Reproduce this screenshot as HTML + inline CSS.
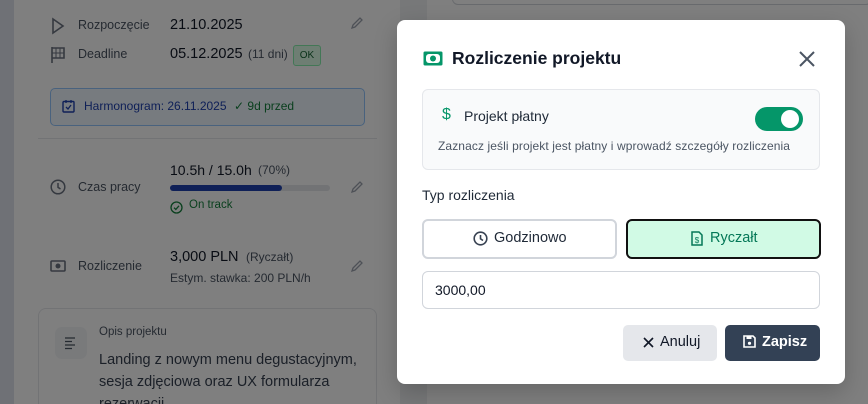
<!DOCTYPE html>
<html style="overflow:hidden"><head><meta charset="utf-8"><style>
*{box-sizing:border-box;margin:0;padding:0}
html,body{width:868px;height:404px;overflow:hidden}
body{position:relative;font-family:"Liberation Sans","DejaVu Sans",sans-serif;background:#fff;color:#1f2937}
.a{position:absolute}
.lbl{font-size:12.5px;color:#4b5563}
.val{font-size:14.5px;color:#111827;font-weight:500}
</style></head><body>
<div class="a" style="left:0;top:0;width:14px;height:404px;background:#dfe3ec"></div>
<div class="a" style="left:400px;top:0;width:27px;height:404px;background:#eef0f3"></div>
<div class="a" style="left:452px;top:-10px;width:420px;height:15px;border:1px solid #d1d5db;border-radius:6px"></div>

<svg class="a" style="left:50px;top:17px" width="16" height="18" viewBox="0 0 16 18"><path d="M3 2 L13 9 L3 16 Z" fill="none" stroke="#6b7280" stroke-width="1.6"/></svg>
<div class="a lbl" style="left:78px;top:18px">Rozpoczęcie</div>
<div class="a val" style="left:170px;top:17px">21.10.2025</div>
<svg class="a" style="left:350px;top:16px" width="14" height="14" viewBox="0 0 14 14"><path d="M2 12 L3 9 L10 2 L12 4 L5 11 Z" fill="none" stroke="#9ca3af" stroke-width="1.3"/></svg>

<svg class="a" style="left:50px;top:46px" width="16" height="18" viewBox="0 0 16 18"><path d="M2 1 V17 M2 2 H14 V12 H2" fill="none" stroke="#6b7280" stroke-width="1.6"/><path d="M6 2V12M10 2V12M2 7H14" stroke="#6b7280" stroke-width="1"/></svg>
<div class="a lbl" style="left:78px;top:47px">Deadline</div>
<div class="a val" style="left:170px;top:46px">05.12.2025</div>
<div class="a" style="left:248px;top:47px;font-size:12px;color:#4b5563">(11 dni)</div>
<div class="a" style="left:293px;top:45px;width:28px;height:21px;border:1px solid #86efac;background:#dcfce7;border-radius:3px;font-size:10px;color:#166534;text-align:center;line-height:19px">OK</div>

<div class="a" style="left:50px;top:88px;width:315px;height:38px;border:1px solid #93c5fd;background:#eff6ff;border-radius:5px"></div>
<svg class="a" style="left:62px;top:99px" width="13" height="14" viewBox="0 0 13 14"><rect x="1" y="2.5" width="11" height="10.5" rx="1" fill="none" stroke="#1e40af" stroke-width="1.4"/><path d="M4 1V4M9 1V4M4 8 L6 10 L9 6" fill="none" stroke="#1e40af" stroke-width="1.3"/></svg>
<div class="a" style="left:84px;top:99px;font-size:12px;color:#1e40af">Harmonogram: 26.11.2025</div>
<div class="a" style="left:234px;top:99px;font-size:12px;color:#15803d">✓ 9d przed</div>

<div class="a" style="left:38px;top:138px;width:339px;height:1px;background:#e5e7eb"></div>

<svg class="a" style="left:50px;top:179px" width="16" height="16" viewBox="0 0 16 16"><circle cx="8" cy="8" r="6.8" fill="none" stroke="#6b7280" stroke-width="1.5"/><path d="M8 4V8.3L10.5 10" fill="none" stroke="#6b7280" stroke-width="1.5"/></svg>
<div class="a lbl" style="left:78px;top:180px">Czas pracy</div>
<div class="a val" style="left:170px;top:162px;font-size:14px">10.5h / 15.0h</div>
<div class="a" style="left:258px;top:163px;font-size:12px;color:#4b5563">(70%)</div>
<div class="a" style="left:170px;top:185px;width:160px;height:6px;background:#e5e7eb;border-radius:3px"></div>
<div class="a" style="left:170px;top:185px;width:112px;height:6px;background:#1e40af;border-radius:3px"></div>
<svg class="a" style="left:170px;top:201px" width="13" height="13" viewBox="0 0 13 13"><circle cx="6.5" cy="6.5" r="5.5" fill="none" stroke="#15803d" stroke-width="1.3"/><path d="M4 6.7 L5.8 8.4 L9 4.8" fill="none" stroke="#15803d" stroke-width="1.3"/></svg>
<div class="a" style="left:189px;top:199px;font-size:11.5px;color:#15803d">On track</div>
<svg class="a" style="left:350px;top:180px" width="14" height="14" viewBox="0 0 14 14"><path d="M2 12 L3 9 L10 2 L12 4 L5 11 Z" fill="none" stroke="#9ca3af" stroke-width="1.3"/></svg>

<svg class="a" style="left:50px;top:259px" width="16" height="14" viewBox="0 0 16 14"><rect x="1" y="2" width="14" height="10" rx="1" fill="none" stroke="#6b7280" stroke-width="1.6"/><circle cx="8" cy="7" r="2.5" fill="#6b7280"/></svg>
<div class="a lbl" style="left:78px;top:259px">Rozliczenie</div>
<div class="a val" style="left:170px;top:249px">3,000 PLN</div>
<div class="a" style="left:246px;top:250px;font-size:12px;color:#4b5563">(Ryczałt)</div>
<div class="a" style="left:170px;top:271px;font-size:12px;color:#4b5563">Estym. stawka: 200 PLN/h</div>
<svg class="a" style="left:350px;top:259px" width="14" height="14" viewBox="0 0 14 14"><path d="M2 12 L3 9 L10 2 L12 4 L5 11 Z" fill="none" stroke="#9ca3af" stroke-width="1.3"/></svg>

<div class="a" style="left:38px;top:308px;width:339px;height:110px;border:1px solid #e5e7eb;border-bottom:none;border-radius:8px 8px 0 0"></div>
<div class="a" style="left:55px;top:327px;width:32px;height:32px;background:#f3f4f6;border-radius:7px"></div>
<svg class="a" style="left:64px;top:336px" width="14" height="14" viewBox="0 0 14 14"><path d="M1 2H11M1 5.5H8M1 9H11M1 12.5H8" stroke="#4b5563" stroke-width="1.3"/></svg>
<div class="a" style="left:99px;top:326px;font-size:11.5px;color:#4b5563">Opis projektu</div>
<div class="a" style="left:99px;top:349px;font-size:14.5px;color:#374151;line-height:22px;width:280px">Landing z nowym menu degustacyjnym, sesja zdjęciowa oraz UX formularza rezerwacji</div>

<div class="a" style="left:0;top:0;width:868px;height:404px;background:rgba(0,0,0,0.5)"></div>

<div class="a" style="left:397px;top:20px;width:448px;height:364px;background:#fff;border-radius:8px;box-shadow:0 8px 24px rgba(0,0,0,.2)"></div>
<svg class="a" style="left:423px;top:51px" width="20" height="15" viewBox="0 0 20 15"><rect x="0.5" y="0.5" width="19" height="14" rx="1.5" fill="#059669"/><rect x="3" y="3" width="14" height="9" rx="3" fill="#fff"/><circle cx="10" cy="7.5" r="3" fill="#059669"/></svg>
<div class="a" style="left:452px;top:48px;font-size:17.5px;font-weight:600;color:#111827">Rozliczenie projektu</div>
<svg class="a" style="left:798px;top:50px" width="18" height="18" viewBox="0 0 18 18"><path d="M2 2L16 16M16 2L2 16" stroke="#4b5563" stroke-width="2"/></svg>

<div class="a" style="left:422px;top:89px;width:398px;height:81px;background:#f9fafb;border:1px solid #e5e7eb;border-radius:6px"></div>
<div class="a" style="left:442px;top:106px;font-size:16px;color:#059669">$</div>
<div class="a" style="left:464px;top:108px;font-size:14px;color:#1f2937">Projekt płatny</div>
<div class="a" style="left:755px;top:107px;width:48px;height:24px;background:#059669;border-radius:12px"></div>
<div class="a" style="left:781px;top:110px;width:18px;height:18px;background:#fff;border-radius:50%"></div>
<div class="a" style="left:438px;top:139px;font-size:12px;color:#4b5563;letter-spacing:0.1px">Zaznacz jeśli projekt jest płatny i wprowadź szczegóły rozliczenia</div>

<div class="a" style="left:422px;top:187px;font-size:14px;color:#1f2937">Typ rozliczenia</div>
<div class="a" style="left:422px;top:219px;width:195px;height:40px;border:2px solid #d1d5db;border-radius:6px"></div>
<svg class="a" style="left:473px;top:231px" width="15" height="15" viewBox="0 0 15 15"><circle cx="7.5" cy="7.5" r="6.3" fill="none" stroke="#374151" stroke-width="1.6"/><path d="M7.5 4V7.8L10 9.5" fill="none" stroke="#374151" stroke-width="1.6"/></svg>
<div class="a" style="left:494px;top:230px;font-size:14.5px;color:#1f2937">Godzinowo</div>
<div class="a" style="left:626px;top:219px;width:195px;height:40px;border:2px solid #111;background:#d1fae5;border-radius:6px"></div>
<svg class="a" style="left:691px;top:231px" width="12" height="15" viewBox="0 0 12 15"><path d="M1 1H8L11 4V14H1Z" fill="none" stroke="#047857" stroke-width="1.5"/><text x="6" y="12" font-size="8" text-anchor="middle" fill="#047857" font-family="Liberation Sans">$</text></svg>
<div class="a" style="left:710px;top:230px;font-size:14.5px;color:#047857">Ryczałt</div>

<div class="a" style="left:422px;top:271px;width:398px;height:38px;border:1px solid #d1d5db;border-radius:6px"></div>
<div class="a" style="left:435px;top:282px;font-size:14px;color:#111827">3000,00</div>

<div class="a" style="left:623px;top:325px;width:94px;height:36px;background:#e5e7eb;border-radius:5px"></div>
<svg class="a" style="left:643px;top:337px" width="11" height="11" viewBox="0 0 11 11"><path d="M1 1L10 10M10 1L1 10" stroke="#111827" stroke-width="1.6"/></svg>
<div class="a" style="left:660px;top:334px;font-size:14.5px;color:#111827">Anuluj</div>
<div class="a" style="left:725px;top:325px;width:95px;height:36px;background:#334155;border-radius:5px"></div>
<svg class="a" style="left:743px;top:335px" width="13" height="13" viewBox="0 0 13 13"><path d="M1 1H10L12 3V12H1Z" fill="none" stroke="#fff" stroke-width="1.6"/><rect x="3.5" y="1" width="5" height="3" fill="#fff"/><circle cx="6.5" cy="8.3" r="1.6" fill="#fff"/></svg>
<div class="a" style="left:762px;top:334px;font-size:14.5px;font-weight:700;color:#fff">Zapisz</div>
</body></html>
